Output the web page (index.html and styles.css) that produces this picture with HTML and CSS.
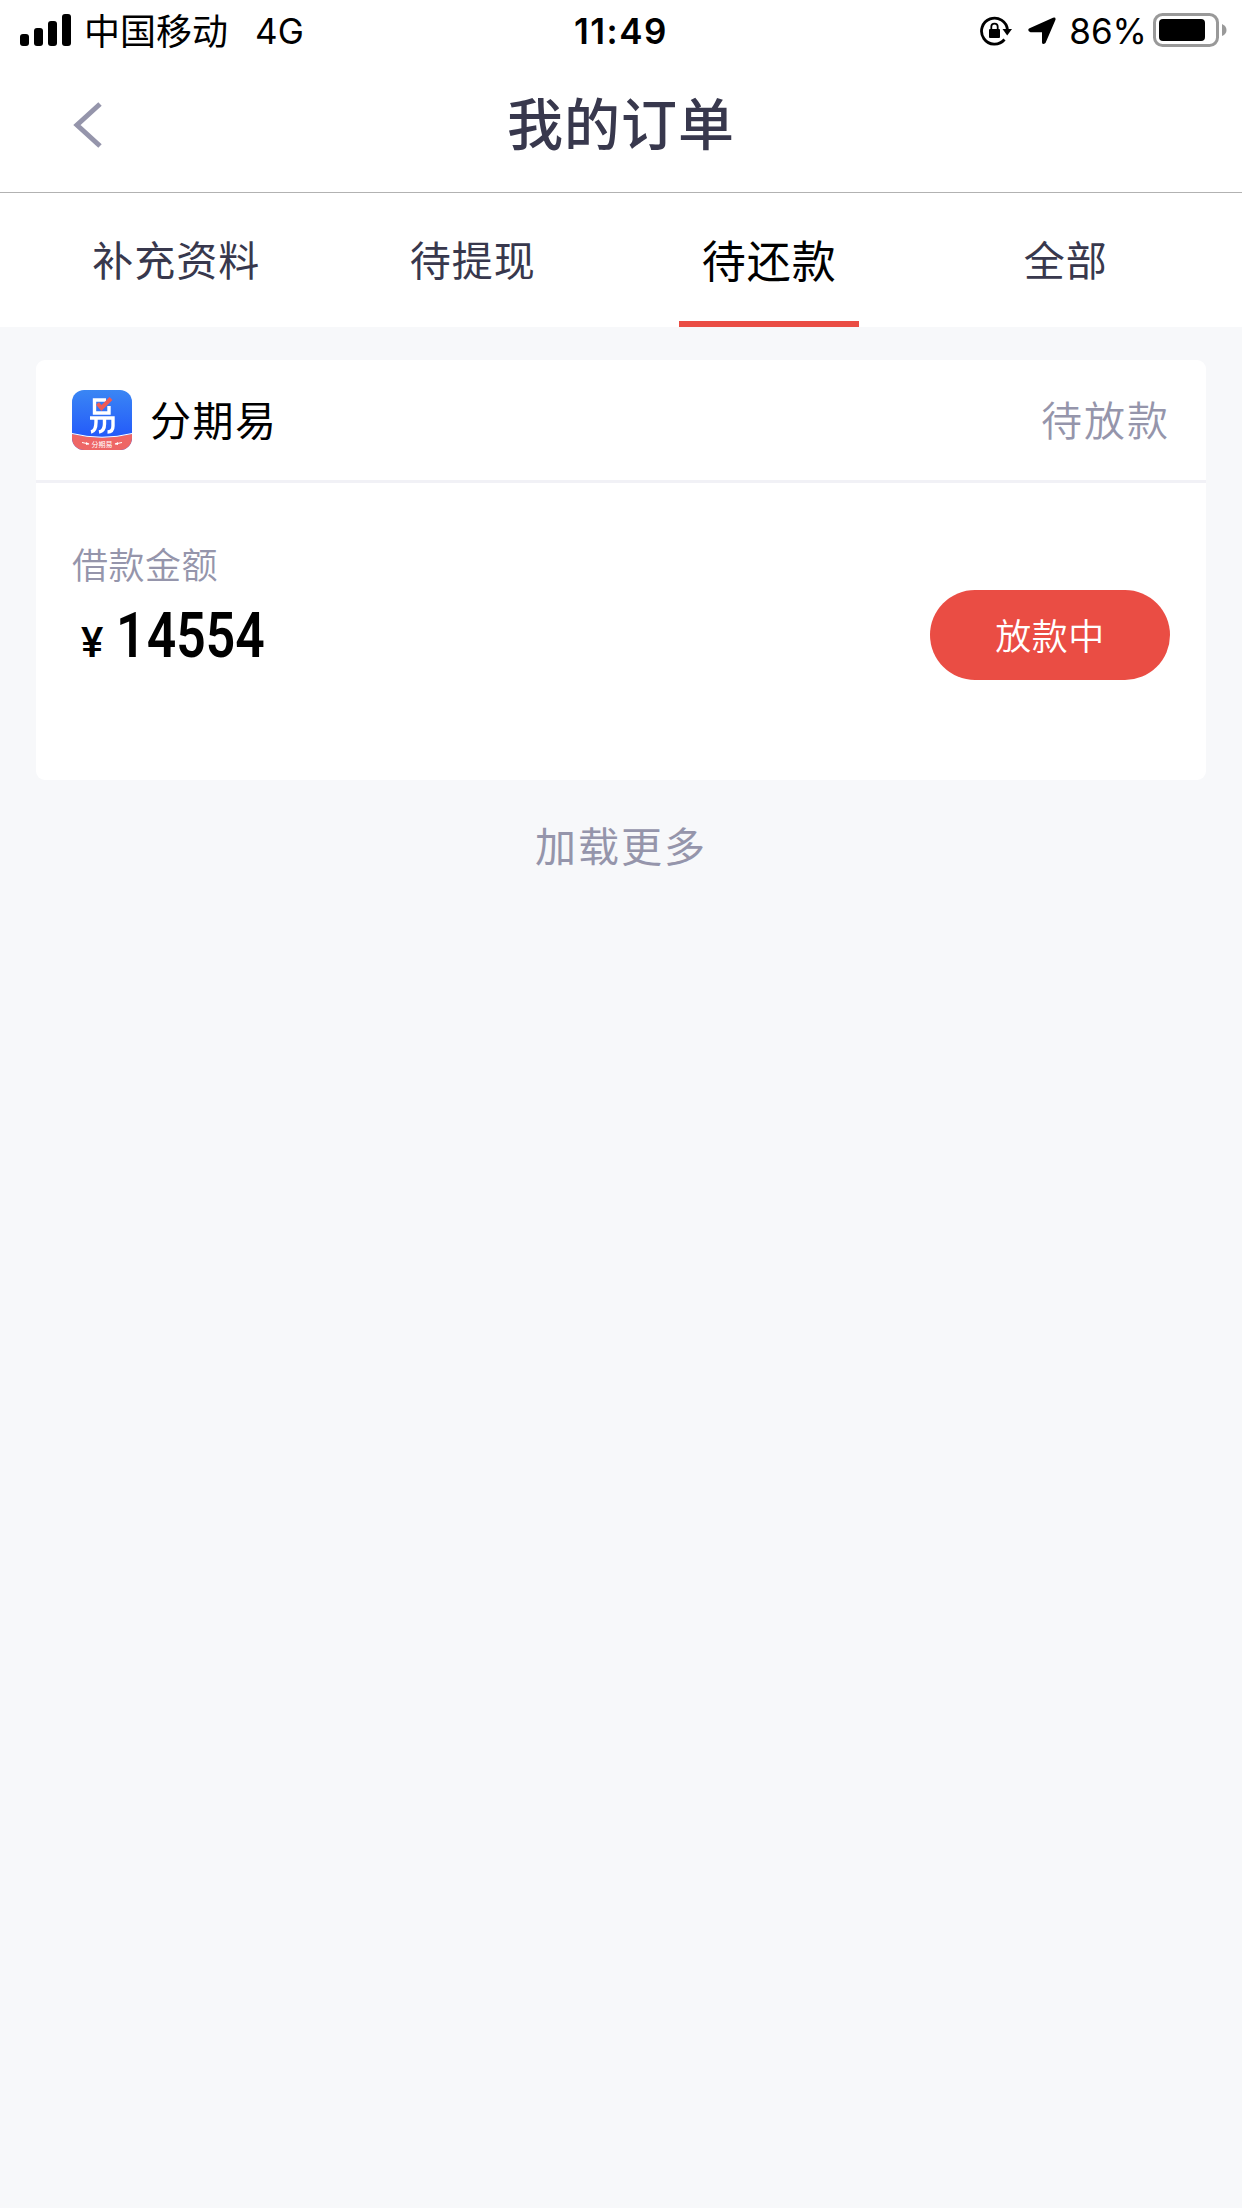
FILE: index.html
```html
<!DOCTYPE html>
<html lang="zh-CN">
<head>
    <meta charset="UTF-8">
    <meta name="viewport" content="width=device-width, initial-scale=1.0">
    <title>我的订单</title>
    <link rel="stylesheet" href="styles.css">
</head>
<body>
    <div class="status-bar">
        <div class="status-left">
            <svg class="signal" width="51" height="32" viewBox="0 0 51 32">
                <rect x="0" y="20" width="9" height="12" rx="3"/>
                <rect x="14" y="14" width="9" height="18" rx="3"/>
                <rect x="28" y="7" width="9" height="25" rx="3"/>
                <rect x="42" y="0" width="9" height="32" rx="3"/>
            </svg>
            <span class="carrier">中国移动</span>
            <span class="network">4G</span>
        </div>
        <div class="status-time">11:49</div>
        <div class="status-right">
            <svg class="rotation-lock" width="32" height="30" viewBox="0 0 32 30">
                <path d="M27.500 14A13 13 0 1 0 24.500 23.500" fill="none" stroke="#000" stroke-width="2.800"/>
                <path d="M22.500 13h9.500l-4.800 6.500z"/>
                <rect x="9" y="13" width="11" height="9" rx="1"/>
                <path d="M11.300 14v-3.200a3.200 3.200 0 0 1 6.400 0V14" fill="none" stroke="#000" stroke-width="1.800"/>
            </svg>
            <svg class="location" width="28" height="28" viewBox="0 0 28 28">
                <path d="M1 11.500L25 .8q3-.8 2.500 2L17.500 26q-3 2.500-3.500-.6V15.200H2.500q-3.500-1.500-1.500-3.700z"/>
            </svg>
            <span class="percent">86%</span>
            <svg class="battery" width="74" height="34" viewBox="0 0 74 34">
                <rect x="1.500" y="1.500" width="63" height="31" rx="8" fill="none" stroke="#999" stroke-width="3"/>
                <rect x="6" y="6" width="46" height="22" rx="4"/>
                <path d="M69 11q4.500 2 4.500 6T69 23z" fill="#999"/>
            </svg>
        </div>
    </div>

    <header class="header">
        <svg class="back" width="30" height="46" viewBox="0 0 30 46">
            <path d="M27 2L4 23L27 44" fill="none" stroke="#9595ab" stroke-width="5"/>
        </svg>
        <h1>我的订单</h1>
    </header>

    <nav class="tabs">
        <a class="tab">补充资料</a>
        <a class="tab">待提现</a>
        <a class="tab active">待还款</a>
        <a class="tab">全部</a>
    </nav>

    <div class="card">
        <div class="card-head">
            <svg class="logo" width="60" height="60" viewBox="0 0 60 60">
                <defs>
                    <linearGradient id="blue" x1="0" y1="0" x2="0" y2="1">
                        <stop offset="0" stop-color="#3a86f4"/>
                        <stop offset="0.8" stop-color="#2359fa"/>
                    </linearGradient>
                    <clipPath id="round"><rect width="60" height="60" rx="12"/></clipPath>
                </defs>
                <g clip-path="url(#round)">
                    <rect width="60" height="60" fill="url(#blue)"/>
                    <path d="M0 44Q30 51 60 44V60H0z" fill="#ee6666"/>
                    <path d="M0 43.500Q30 51 60 43.500" fill="none" stroke="#fff" stroke-width="1"/>
                    <path d="M34 10H22.500V23H37V16" fill="none" stroke="#fff" stroke-width="3.400"/>
                    <path d="M18 28H41V36Q41 42 35.500 42M24 28V32Q24 41 19 42M32.500 28V34Q32.500 41 27 42" fill="none" stroke="#fff" stroke-width="3.400"/>
                    <path d="M25.500 13.500L29.500 18L39 8.500" fill="none" stroke="#ef5b56" stroke-width="4"/>
                    <path d="M10 52.500L17 54M50 52.500L43 54" stroke="#fff" stroke-width="1"/>
                    <path d="M14 52l3.500 2-3.500 1zM46 52l-3.500 2 3.500 1z" fill="#fff"/>
                    <text x="30" y="56.500" class="logo-text">分期易</text>
                </g>
            </svg>
            <span class="name">分期易</span>
            <span class="state">待放款</span>
        </div>
        <div class="card-body">
            <div class="loan">
                <div class="label">借款金额</div>
                <div class="amount"><span class="yen">¥</span><span class="digits"><span class="one">1</span>4554</span></div>
            </div>
            <button class="btn">放款中</button>
        </div>
    </div>

    <div class="more">加载更多</div>
</body>
</html>
```

FILE: styles.css
```css
body {
    font-family: "Noto Sans CJK SC", sans-serif;
    background-color: #f7f8fa;
    color: #000;
    margin: 0;
    min-height: 2208px;
}

svg {
    display: block;
    flex: none;
}

/* status bar */
.status-bar {
    display: grid;
    grid-template-columns: 1fr auto 1fr;
    height: 60px;
    background-color: #fff;
    font-size: 35px;
    line-height: 60px;
}

.status-left, .status-right {
    display: flex;
    align-items: center;
}

.status-left {
    padding-left: 20px;
}

.status-right {
    justify-content: flex-end;
    padding-right: 15px;
}

.carrier {
    margin-left: 13px;
    font-size: 36px;
    line-height: 58px;
    padding-bottom: 2px;
}

.network {
    margin-left: 27px;
}

.network, .percent, .status-time {
    font-family: Inter, sans-serif;
    padding-top: 3px;
    line-height: 57px;
}

.status-time {
    font-weight: 600;
    letter-spacing: 1.5px;
}

.rotation-lock {
    margin-top: 2px;
}

.location {
    margin: 2px 0 0 16px;
}

.percent {
    margin-left: 13px;
}

.battery {
    margin-left: 6px;
}

/* header */
.header {
    display: grid;
    grid-template-columns: 1fr auto 1fr;
    height: 132px;
    background-color: #fff;
    border-bottom: 1px solid #b2b2b2;
}

.back {
    margin: 42px 0 0 73px;
}

h1 {
    margin: 0;
    color: #38384d;
    font-size: 56px;
    font-weight: 500;
    letter-spacing: 1px;
    line-height: 122px;
}

/* tabs */
.tabs {
    display: grid;
    grid-template-columns: repeat(4, 1fr);
    height: 134px;
    padding: 0 28px;
    background-color: #fff;
}

.tab {
    justify-self: center;
    box-sizing: border-box;
    min-width: 180px;
    height: 134px;
    color: #38384d;
    font-size: 41px;
    letter-spacing: 1px;
    line-height: 131px;
    text-align: center;
}

.tab.active {
    color: #000;
    font-size: 44px;
    line-height: 133px;
    border-bottom: 6px solid #ea4d44;
}

/* order card */
.card {
    margin: 33px 36px 0;
    height: 420px;
    background-color: #fff;
    border-radius: 9px;
}

.card-head {
    display: flex;
    align-items: center;
    height: 120px;
    padding: 0 36px;
    border-bottom: 3px solid #f1f1f6;
    font-size: 41px;
    letter-spacing: 1.5px;
    line-height: 116px;
}

.logo-text {
    fill: #fff;
    font-size: 7px;
    letter-spacing: 0;
    text-anchor: middle;
}

.name, .state {
    padding-bottom: 4px;
}

.name {
    margin-left: 18px;
}

.state {
    margin-left: auto;
    color: #9595ab;
    font-weight: 350;
    letter-spacing: 2px;
}

.card-body {
    display: flex;
    justify-content: space-between;
    padding: 53px 36px 0;
}

.label {
    color: #9595ab;
    font-size: 36px;
    font-weight: 350;
    letter-spacing: 0.5px;
    line-height: 54px;
}

.amount {
    display: flex;
    align-items: baseline;
    padding-left: 9px;
    font-family: Roboto, sans-serif;
    line-height: 91px;
}

.yen {
    font-size: 42px;
    font-weight: 500;
}

.digits {
    margin-left: 13px;
    font-size: 63px;
    font-weight: 600;
    transform: scaleX(0.82);
    transform-origin: left;
}

.one {
    letter-spacing: 1.5px;
}

.btn {
    width: 240px;
    height: 90px;
    margin-top: 54px;
    padding: 0 0 3px;
    border: none;
    border-radius: 45px;
    background-color: #ea4d44;
    color: #fff;
    font-family: inherit;
    font-size: 36px;
    font-weight: 350;
    letter-spacing: 0.5px;
}

.more {
    margin-top: 34px;
    color: #9595ab;
    font-size: 41px;
    letter-spacing: 2px;
    line-height: 60px;
    text-align: center;
}
```
